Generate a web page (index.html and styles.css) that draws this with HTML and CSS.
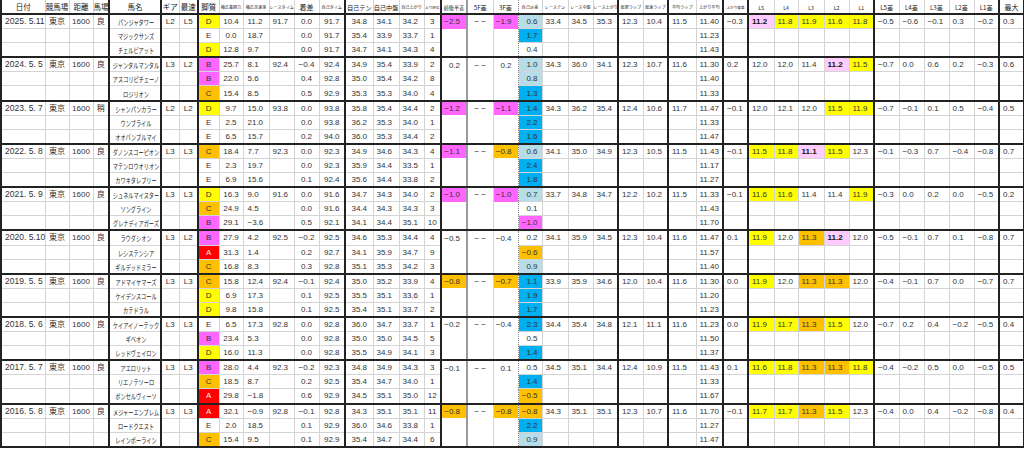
FILE: index.html
```html
<!DOCTYPE html>
<html lang="ja">
<head>
<meta charset="utf-8">
<title>NHKマイルC 過去10年</title>
<link rel="stylesheet" href="styles.css">
</head>
<body>
<table class="races">
<colgroup>
<col class="w44 tk"><col class="w24"><col class="w24"><col class="w16">
<col class="w52 tk"><col class="w18 tk"><col class="w19"><col class="w21 tk">
<col class="w24"><col class="w26"><col class="w25"><col class="w25"><col class="w26">
<col class="w28 tk"><col class="w26"><col class="w25"><col class="w17">
<col class="w26 tk"><col class="w26 mid"><col class="w25"><col class="w24">
<col class="w26"><col class="w25"><col class="w25"><col class="w25 tk"><col class="w25">
<col class="w28 tk"><col class="w27"><col class="w25 tk">
<col class="w26 tk"><col class="w24"><col class="w26"><col class="w25"><col class="w25">
<col class="w25 tk"><col class="w25"><col class="w25"><col class="w25"><col class="w25">
<col class="w25 tk end">
</colgroup>
<thead>
<tr class="head">
<th><span class="h8">日付</span></th><th><span class="h8">競馬場</span></th><th><span class="h8">距離</span></th><th><span class="h8">馬場</span></th>
<th><span class="h8">馬名</span></th><th><span class="h8">ギア</span></th><th><span class="h8">最速</span></th><th><span class="h8">脚質</span></th>
<th><span class="h4">補正着順力</span></th><th><span class="h4">補正走速率</span></th><th><span class="h4">レースタイム</span></th><th><span class="h7">着差</span></th><th><span class="h4">自己タイム</span></th>
<th><span class="h6">自己テン</span></th><th><span class="h6">自己中盤</span></th><th><span class="h4">自己上がり</span></th><th><span class="h3">上り順位</span></th>
<th><span class="h5">前後半差</span></th><th><span class="h6">5F差</span></th><th><span class="h6">3F差</span></th><th><span class="h4">自己3F差</span></th>
<th><span class="h4">レーステン</span></th><th><span class="h4">レース中盤</span></th><th><span class="h4">レース上がり</span></th><th><span class="h4">最遅ラップ</span></th><th><span class="h4">最速ラップ</span></th>
<th><span class="h4">平均ラップ</span></th><th><span class="h4">上がり平均</span></th><th><span class="h3">上がり偏差</span></th>
<th><span class="h5">L5</span></th><th><span class="h5">L4</span></th><th><span class="h5">L3</span></th><th><span class="h5">L2</span></th><th><span class="h5">L1</span></th>
<th><span class="h6">L5差</span></th><th><span class="h6">L4差</span></th><th><span class="h6">L3差</span></th><th><span class="h6">L2差</span></th><th><span class="h6">L1差</span></th>
<th><span class="h7">最大</span></th>
</tr>
</thead>
<tbody>
<!-- 2025 -->
<tr class="top"><td>2025. 5.11</td><td>東京</td><td>1600</td><td>良</td><td><span class="kana">パンジャタワー</span></td><td>L2</td><td>L5</td><td class="y">D</td><td>10.4</td><td>11.2</td><td>91.7</td><td>0.0</td><td>91.7</td><td>34.8</td><td>34.1</td><td>34.2</td><td>3</td><td class="m">−2.5</td><td>− −</td><td class="m">−1.9</td><td class="lb">0.6</td><td>33.4</td><td>34.5</td><td>35.3</td><td>12.3</td><td>10.4</td><td>11.5</td><td>11.40</td><td>−0.3</td><td class="pk b">11.2</td><td class="y">11.8</td><td class="y">11.9</td><td class="y">11.6</td><td class="y">11.8</td><td>−0.5</td><td>−0.6</td><td>−0.1</td><td>0.3</td><td>−0.2</td><td>0.3</td></tr>
<tr class="sub"><td></td><td></td><td></td><td></td><td><span class="kana">マジックサンズ</span></td><td></td><td></td><td>E</td><td>0.0</td><td>18.7</td><td></td><td>0.0</td><td>91.7</td><td>35.4</td><td>33.9</td><td>33.7</td><td>1</td><td></td><td></td><td></td><td class="bl">1.7</td><td></td><td></td><td></td><td></td><td></td><td></td><td>11.23</td><td></td><td></td><td></td><td></td><td></td><td></td><td></td><td></td><td></td><td></td><td></td><td></td></tr>
<tr class="sub"><td></td><td></td><td></td><td></td><td><span class="kana">チェルビアット</span></td><td></td><td></td><td class="y">D</td><td>12.8</td><td>9.7</td><td></td><td>0.0</td><td>91.7</td><td>34.7</td><td>34.1</td><td>34.3</td><td>4</td><td></td><td></td><td></td><td>0.4</td><td></td><td></td><td></td><td></td><td></td><td></td><td>11.43</td><td></td><td></td><td></td><td></td><td></td><td></td><td></td><td></td><td></td><td></td><td></td><td></td></tr>
<!-- 2024 -->
<tr class="top"><td>2024. 5. 5</td><td>東京</td><td>1600</td><td>良</td><td><span class="kana">ジャンタルマンタル</span></td><td>L3</td><td>L2</td><td class="m">B</td><td>25.7</td><td>8.1</td><td>92.4</td><td>−0.4</td><td>92.4</td><td>34.9</td><td>35.4</td><td>33.9</td><td>2</td><td>0.2</td><td>− −</td><td>0.2</td><td class="lb">1.0</td><td>34.3</td><td>36.0</td><td>34.1</td><td>12.3</td><td>10.7</td><td>11.6</td><td>11.30</td><td>0.2</td><td>12.0</td><td>12.0</td><td>11.4</td><td class="pk b">11.2</td><td class="y">11.5</td><td>−0.7</td><td>0.0</td><td>0.6</td><td>0.2</td><td>−0.3</td><td>0.6</td></tr>
<tr class="sub"><td></td><td></td><td></td><td></td><td><span class="kana">アスコリピチェーノ</span></td><td></td><td></td><td class="m">B</td><td>22.0</td><td>5.6</td><td></td><td>0.4</td><td>92.8</td><td>35.0</td><td>35.4</td><td>34.2</td><td>8</td><td></td><td></td><td></td><td class="lb">0.8</td><td></td><td></td><td></td><td></td><td></td><td></td><td>11.40</td><td></td><td></td><td></td><td></td><td></td><td></td><td></td><td></td><td></td><td></td><td></td><td></td></tr>
<tr class="sub"><td></td><td></td><td></td><td></td><td><span class="kana">ロジリオン</span></td><td></td><td></td><td class="o">C</td><td>15.4</td><td>8.5</td><td></td><td>0.5</td><td>92.9</td><td>35.3</td><td>35.3</td><td>34.0</td><td>4</td><td></td><td></td><td></td><td class="bl">1.3</td><td></td><td></td><td></td><td></td><td></td><td></td><td>11.33</td><td></td><td></td><td></td><td></td><td></td><td></td><td></td><td></td><td></td><td></td><td></td><td></td></tr>
<!-- 2023 -->
<tr class="top"><td>2023. 5. 7</td><td>東京</td><td>1600</td><td>稍</td><td><span class="kana">シャンパンカラー</span></td><td>L2</td><td>L2</td><td class="y">D</td><td>9.7</td><td>15.0</td><td>93.8</td><td>0.0</td><td>93.8</td><td>35.8</td><td>35.4</td><td>34.4</td><td>2</td><td class="m">−1.2</td><td>− −</td><td class="m">−1.1</td><td class="bl">1.4</td><td>34.3</td><td>36.2</td><td>35.4</td><td>12.4</td><td>10.6</td><td>11.7</td><td>11.47</td><td>−0.1</td><td>12.0</td><td>12.1</td><td>12.0</td><td class="y">11.5</td><td class="y">11.9</td><td>−0.7</td><td>−0.1</td><td>0.1</td><td>0.5</td><td>−0.4</td><td>0.5</td></tr>
<tr class="sub"><td></td><td></td><td></td><td></td><td><span class="kana">ウンブライル</span></td><td></td><td></td><td>E</td><td>2.5</td><td>21.0</td><td></td><td>0.0</td><td>93.8</td><td>36.2</td><td>35.3</td><td>34.0</td><td>1</td><td></td><td></td><td></td><td class="bl">2.2</td><td></td><td></td><td></td><td></td><td></td><td></td><td>11.33</td><td></td><td></td><td></td><td></td><td></td><td></td><td></td><td></td><td></td><td></td><td></td><td></td></tr>
<tr class="sub"><td></td><td></td><td></td><td></td><td><span class="kana">オオバンブルマイ</span></td><td></td><td></td><td>E</td><td>6.5</td><td>15.7</td><td></td><td>0.2</td><td>94.0</td><td>36.0</td><td>35.3</td><td>34.4</td><td>2</td><td></td><td></td><td></td><td class="bl">1.6</td><td></td><td></td><td></td><td></td><td></td><td></td><td>11.47</td><td></td><td></td><td></td><td></td><td></td><td></td><td></td><td></td><td></td><td></td><td></td><td></td></tr>
<!-- 2022 -->
<tr class="top"><td>2022. 5. 8</td><td>東京</td><td>1600</td><td>良</td><td><span class="kana">ダノンスコーピオン</span></td><td>L3</td><td>L3</td><td class="o">C</td><td>18.4</td><td>7.7</td><td>92.3</td><td>0.0</td><td>92.3</td><td>34.9</td><td>34.6</td><td>34.3</td><td>4</td><td class="m">−1.1</td><td>− −</td><td class="o">−0.8</td><td class="lb">0.6</td><td>34.1</td><td>35.0</td><td>34.9</td><td>12.3</td><td>10.5</td><td>11.5</td><td>11.43</td><td>−0.1</td><td class="y">11.5</td><td class="y">11.8</td><td class="pk b">11.1</td><td class="y">11.5</td><td>12.3</td><td>−0.1</td><td>−0.3</td><td>0.7</td><td>−0.4</td><td>−0.8</td><td>0.7</td></tr>
<tr class="sub"><td></td><td></td><td></td><td></td><td><span class="kana">マテンロウオリオン</span></td><td></td><td></td><td>E</td><td>2.3</td><td>19.7</td><td></td><td>0.0</td><td>92.3</td><td>35.9</td><td>34.4</td><td>33.5</td><td>1</td><td></td><td></td><td></td><td class="bl">2.4</td><td></td><td></td><td></td><td></td><td></td><td></td><td>11.17</td><td></td><td></td><td></td><td></td><td></td><td></td><td></td><td></td><td></td><td></td><td></td><td></td></tr>
<tr class="sub"><td></td><td></td><td></td><td></td><td><span class="kana">カワキタレブリー</span></td><td></td><td></td><td>E</td><td>6.9</td><td>15.6</td><td></td><td>0.1</td><td>92.4</td><td>35.6</td><td>34.4</td><td>33.8</td><td>2</td><td></td><td></td><td></td><td class="bl">1.8</td><td></td><td></td><td></td><td></td><td></td><td></td><td>11.27</td><td></td><td></td><td></td><td></td><td></td><td></td><td></td><td></td><td></td><td></td><td></td><td></td></tr>
<!-- 2021 -->
<tr class="top"><td>2021. 5. 9</td><td>東京</td><td>1600</td><td>良</td><td><span class="kana">シュネルマイスター</span></td><td>L3</td><td>L3</td><td class="y">D</td><td>16.3</td><td>9.0</td><td>91.6</td><td>0.0</td><td>91.6</td><td>34.7</td><td>34.3</td><td>34.0</td><td>2</td><td class="m">−1.0</td><td>− −</td><td class="m">−1.0</td><td class="lb">0.7</td><td>33.7</td><td>34.8</td><td>34.7</td><td>12.2</td><td>10.2</td><td>11.5</td><td>11.33</td><td>−0.1</td><td class="y">11.6</td><td class="y">11.6</td><td>11.4</td><td>11.4</td><td class="y">11.9</td><td>−0.3</td><td>0.0</td><td>0.2</td><td>0.0</td><td>−0.5</td><td>0.2</td></tr>
<tr class="sub"><td></td><td></td><td></td><td></td><td><span class="kana">ソングライン</span></td><td></td><td></td><td class="o">C</td><td>24.9</td><td>4.5</td><td></td><td>0.0</td><td>91.6</td><td>34.4</td><td>34.3</td><td>34.3</td><td>3</td><td></td><td></td><td></td><td>0.1</td><td></td><td></td><td></td><td></td><td></td><td></td><td>11.43</td><td></td><td></td><td></td><td></td><td></td><td></td><td></td><td></td><td></td><td></td><td></td><td></td></tr>
<tr class="sub"><td></td><td></td><td></td><td></td><td><span class="kana">グレナディアガーズ</span></td><td></td><td></td><td class="m">B</td><td>29.1</td><td>−3.6</td><td></td><td>0.5</td><td>92.1</td><td>34.1</td><td>34.4</td><td>35.1</td><td>10</td><td></td><td></td><td></td><td class="m">−1.0</td><td></td><td></td><td></td><td></td><td></td><td></td><td>11.70</td><td></td><td></td><td></td><td></td><td></td><td></td><td></td><td></td><td></td><td></td><td></td><td></td></tr>
<!-- 2020 -->
<tr class="top"><td>2020. 5.10</td><td>東京</td><td>1600</td><td>良</td><td><span class="kana">ラウダシオン</span></td><td>L3</td><td>L2</td><td class="m">B</td><td>27.9</td><td>4.2</td><td>92.5</td><td>−0.2</td><td>92.5</td><td>34.6</td><td>35.3</td><td>34.4</td><td>4</td><td>−0.5</td><td>− −</td><td>−0.4</td><td>0.2</td><td>34.1</td><td>35.9</td><td>34.5</td><td>12.3</td><td>10.4</td><td>11.6</td><td>11.47</td><td>0.1</td><td class="y">11.9</td><td>12.0</td><td class="o">11.3</td><td class="pk b">11.2</td><td>12.0</td><td>−0.5</td><td>−0.1</td><td>0.7</td><td>0.1</td><td>−0.8</td><td>0.7</td></tr>
<tr class="sub"><td></td><td></td><td></td><td></td><td><span class="kana">レシステンシア</span></td><td></td><td></td><td class="rd">A</td><td>31.3</td><td>1.4</td><td></td><td>0.2</td><td>92.7</td><td>34.1</td><td>35.9</td><td>34.7</td><td>9</td><td></td><td></td><td></td><td class="o">−0.6</td><td></td><td></td><td></td><td></td><td></td><td></td><td>11.57</td><td></td><td></td><td></td><td></td><td></td><td></td><td></td><td></td><td></td><td></td><td></td><td></td></tr>
<tr class="sub"><td></td><td></td><td></td><td></td><td><span class="kana">ギルデッドミラー</span></td><td></td><td></td><td class="o">C</td><td>16.8</td><td>8.3</td><td></td><td>0.3</td><td>92.8</td><td>35.1</td><td>35.3</td><td>34.2</td><td>3</td><td></td><td></td><td></td><td class="lb">0.9</td><td></td><td></td><td></td><td></td><td></td><td></td><td>11.40</td><td></td><td></td><td></td><td></td><td></td><td></td><td></td><td></td><td></td><td></td><td></td><td></td></tr>
<!-- 2019 -->
<tr class="top"><td>2019. 5. 5</td><td>東京</td><td>1600</td><td>良</td><td><span class="kana">アドマイヤマーズ</span></td><td>L3</td><td>L3</td><td class="o">C</td><td>15.8</td><td>12.4</td><td>92.4</td><td>−0.1</td><td>92.4</td><td>35.0</td><td>35.2</td><td>33.9</td><td>4</td><td class="o">−0.8</td><td>− −</td><td class="o">−0.7</td><td class="bl">1.1</td><td>33.9</td><td>35.9</td><td>34.6</td><td>12.0</td><td>10.4</td><td>11.6</td><td>11.30</td><td>0.0</td><td class="y">11.9</td><td>12.0</td><td class="o">11.3</td><td class="o">11.3</td><td>12.0</td><td>−0.4</td><td>−0.1</td><td>0.7</td><td>0.0</td><td>−0.7</td><td>0.7</td></tr>
<tr class="sub"><td></td><td></td><td></td><td></td><td><span class="kana">ケイデンスコール</span></td><td></td><td></td><td class="y">D</td><td>6.9</td><td>17.3</td><td></td><td>0.1</td><td>92.5</td><td>35.5</td><td>35.1</td><td>33.6</td><td>1</td><td></td><td></td><td></td><td class="bl">1.9</td><td></td><td></td><td></td><td></td><td></td><td></td><td>11.20</td><td></td><td></td><td></td><td></td><td></td><td></td><td></td><td></td><td></td><td></td><td></td><td></td></tr>
<tr class="sub"><td></td><td></td><td></td><td></td><td><span class="kana">カテドラル</span></td><td></td><td></td><td class="y">D</td><td>9.8</td><td>15.8</td><td></td><td>0.1</td><td>92.5</td><td>35.4</td><td>35.1</td><td>33.7</td><td>2</td><td></td><td></td><td></td><td class="bl">1.7</td><td></td><td></td><td></td><td></td><td></td><td></td><td>11.23</td><td></td><td></td><td></td><td></td><td></td><td></td><td></td><td></td><td></td><td></td><td></td><td></td></tr>
<!-- 2018 -->
<tr class="top"><td>2018. 5. 6</td><td>東京</td><td>1600</td><td>良</td><td><span class="kana">ケイアイノーテック</span></td><td>L3</td><td>L3</td><td>E</td><td>6.5</td><td>17.3</td><td>92.8</td><td>0.0</td><td>92.8</td><td>36.0</td><td>34.7</td><td>33.7</td><td>1</td><td>−0.2</td><td>− −</td><td>−0.4</td><td class="bl">2.3</td><td>34.4</td><td>35.4</td><td>34.8</td><td>12.1</td><td>11.1</td><td>11.6</td><td>11.23</td><td>0.0</td><td class="y">11.9</td><td class="y">11.7</td><td class="o">11.3</td><td class="y">11.5</td><td>12.0</td><td>−0.7</td><td>0.2</td><td>0.4</td><td>−0.2</td><td>−0.5</td><td>0.4</td></tr>
<tr class="sub"><td></td><td></td><td></td><td></td><td><span class="kana">ギベオン</span></td><td></td><td></td><td class="m">B</td><td>23.4</td><td>5.3</td><td></td><td>0.0</td><td>92.8</td><td>35.0</td><td>35.0</td><td>34.5</td><td>5</td><td></td><td></td><td></td><td>0.5</td><td></td><td></td><td></td><td></td><td></td><td></td><td>11.50</td><td></td><td></td><td></td><td></td><td></td><td></td><td></td><td></td><td></td><td></td><td></td><td></td></tr>
<tr class="sub"><td></td><td></td><td></td><td></td><td><span class="kana">レッドヴェイロン</span></td><td></td><td></td><td class="y">D</td><td>16.0</td><td>11.3</td><td></td><td>0.0</td><td>92.8</td><td>35.5</td><td>34.9</td><td>34.1</td><td>3</td><td></td><td></td><td></td><td class="bl">1.4</td><td></td><td></td><td></td><td></td><td></td><td></td><td>11.37</td><td></td><td></td><td></td><td></td><td></td><td></td><td></td><td></td><td></td><td></td><td></td><td></td></tr>
<!-- 2017 -->
<tr class="top"><td>2017. 5. 7</td><td>東京</td><td>1600</td><td>良</td><td><span class="kana">アエロリット</span></td><td>L3</td><td>L3</td><td class="m">B</td><td>28.0</td><td>4.4</td><td>92.3</td><td>−0.2</td><td>92.3</td><td>34.8</td><td>34.9</td><td>34.3</td><td>3</td><td>−0.1</td><td>− −</td><td>0.1</td><td>0.5</td><td>34.5</td><td>35.1</td><td>34.4</td><td>12.4</td><td>10.9</td><td>11.5</td><td>11.43</td><td>0.1</td><td class="y">11.6</td><td class="y">11.8</td><td class="o">11.3</td><td class="o">11.3</td><td class="y">11.8</td><td>−0.4</td><td>−0.2</td><td>0.5</td><td>0.0</td><td>−0.5</td><td>0.5</td></tr>
<tr class="sub"><td></td><td></td><td></td><td></td><td><span class="kana">リエノテソーロ</span></td><td></td><td></td><td class="o">C</td><td>18.5</td><td>8.7</td><td></td><td>0.2</td><td>92.5</td><td>35.4</td><td>34.7</td><td>34.0</td><td>1</td><td></td><td></td><td></td><td class="bl">1.4</td><td></td><td></td><td></td><td></td><td></td><td></td><td>11.33</td><td></td><td></td><td></td><td></td><td></td><td></td><td></td><td></td><td></td><td></td><td></td><td></td></tr>
<tr class="sub"><td></td><td></td><td></td><td></td><td><span class="kana">ボンセルヴィーソ</span></td><td></td><td></td><td class="rd">A</td><td>29.8</td><td>−1.8</td><td></td><td>0.6</td><td>92.9</td><td>34.5</td><td>35.1</td><td>35.0</td><td>12</td><td></td><td></td><td></td><td class="o">−0.5</td><td></td><td></td><td></td><td></td><td></td><td></td><td>11.67</td><td></td><td></td><td></td><td></td><td></td><td></td><td></td><td></td><td></td><td></td><td></td><td></td></tr>
<!-- 2016 -->
<tr class="top"><td>2016. 5. 8</td><td>東京</td><td>1600</td><td>良</td><td><span class="kana">メジャーエンブレム</span></td><td>L3</td><td>L3</td><td class="rd">A</td><td>32.1</td><td>−0.9</td><td>92.8</td><td>−0.1</td><td>92.8</td><td>34.3</td><td>35.1</td><td>35.1</td><td>11</td><td class="o">−0.8</td><td>− −</td><td class="o">−0.8</td><td class="o">−0.8</td><td>34.3</td><td>35.1</td><td>35.1</td><td>12.3</td><td>10.7</td><td>11.6</td><td>11.70</td><td>−0.1</td><td class="y">11.7</td><td class="y">11.7</td><td class="o">11.3</td><td class="y">11.5</td><td>12.3</td><td>−0.4</td><td>0.0</td><td>0.4</td><td>−0.2</td><td>−0.8</td><td>0.4</td></tr>
<tr class="sub"><td></td><td></td><td></td><td></td><td><span class="kana">ロードクエスト</span></td><td></td><td></td><td>E</td><td>2.0</td><td>18.5</td><td></td><td>0.1</td><td>92.9</td><td>36.0</td><td>34.6</td><td>33.8</td><td>1</td><td></td><td></td><td></td><td class="bl">2.2</td><td></td><td></td><td></td><td></td><td></td><td></td><td>11.27</td><td></td><td></td><td></td><td></td><td></td><td></td><td></td><td></td><td></td><td></td><td></td><td></td></tr>
<tr class="sub last"><td></td><td></td><td></td><td></td><td><span class="kana">レインボーライン</span></td><td></td><td></td><td class="o">C</td><td>15.4</td><td>9.5</td><td></td><td>0.1</td><td>92.9</td><td>35.4</td><td>34.7</td><td>34.4</td><td>6</td><td></td><td></td><td></td><td class="lb">0.9</td><td></td><td></td><td></td><td></td><td></td><td></td><td>11.47</td><td></td><td></td><td></td><td></td><td></td><td></td><td></td><td></td><td></td><td></td><td></td><td></td></tr>
</tbody>
</table>
</body>
</html>
```

FILE: styles.css
```css
html, body {
  margin: 0;
  padding: 0;
  background: #ffffff;
}

body {
  font-family: "Liberation Sans", "Noto Sans CJK JP", sans-serif;
  color: #333333;
}

.races {
  border-collapse: collapse;
  table-layout: fixed;
  width: 1024px;
  font-size: 8px;
  line-height: 9px;
}

/* column widths */
.races col.w16 { width: 16px; }
.races col.w17 { width: 17px; }
.races col.w18 { width: 18px; }
.races col.w19 { width: 19px; }
.races col.w21 { width: 21px; }
.races col.w24 { width: 24px; }
.races col.w25 { width: 25px; }
.races col.w26 { width: 26px; }
.races col.w27 { width: 27px; }
.races col.w28 { width: 28px; }
.races col.w44 { width: 44px; }
.races col.w52 { width: 52px; }

/* heavy column rules */
.races col.tk { border-left: 2px solid #222222; }
.races col.mid { border-left: 2px solid #9a9a9a; }
.races col.end { border-right: 2px solid #222222; }

.races th,
.races td {
  border: 1px solid #d4d4d4;
  padding: 0 0 0 3px;
  white-space: nowrap;
  overflow: hidden;
  text-align: left;
  vertical-align: middle;
}

/* header */
.races .head th {
  height: 13px;
  padding: 0;
  text-align: center;
  font-weight: normal;
  color: #1a1a1a;
  font-family: "Noto Sans CJK JP", sans-serif;
  border-top: none;
  border-bottom: 2px solid #222222;
}
.h8 { font-size: 7.5px; }
.h7 { font-size: 7px; }
.h6 { font-size: 6.2px; }
.h5 { font-size: 5.2px; }
.h4 { font-size: 4.1px; }
.h3 { font-size: 3.6px; }

/* body rows */
.races tbody td { height: 13.1px; }
.races tr.top td { border-top: 2px solid #222222; }
.races tr.last td { border-bottom: 2px solid #222222; }

/* merged look of 前後半差 / 5F差 / 3F差 in follow-up rows */
.races tr.sub td:nth-child(18),
.races tr.sub td:nth-child(19),
.races tr.sub td:nth-child(20) {
  border-top-style: hidden;
}

/* dotted rule before 自己3F差 */
.races td:nth-child(20),
.races th:nth-child(20) { border-right: 1px dotted #8a8a8a; }
.races td:nth-child(21),
.races th:nth-child(21) { border-left: 1px dotted #8a8a8a; }

/* alignment by column */
.races td:nth-child(2),
.races td:nth-child(3),
.races td:nth-child(4),
.races td:nth-child(6),
.races td:nth-child(7),
.races td:nth-child(8),
.races td:nth-child(9),
.races td:nth-child(12),
.races td:nth-child(13),
.races td:nth-child(14),
.races td:nth-child(17),
.races td:nth-child(19) {
  text-align: center;
  padding: 0;
}
.races td:nth-child(10) { padding-left: 4px; }
.races td:nth-child(18),
.races td:nth-child(20) {
  text-align: right;
  padding: 0 6px 0 0;
}
.races td:nth-child(21) {
  text-align: right;
  padding: 0 4px 0 0;
}
.races td:nth-child(1) { font-size: 8.5px; }
.races td:nth-child(2),
.races td:nth-child(4) { font-size: 8px; }

/* horse names, condensed */
.races td:nth-child(5) { padding: 0; }
.kana {
  display: block;
  width: 74px;
  margin-left: -11px;
  text-align: center;
  font-family: "Noto Sans CJK JP", sans-serif;
  font-size: 7.4px;
  transform: scaleX(0.7);
  color: #222222;
}

/* fills */
.y  { background: #ffff00; }
.m  { background: #ff66ff; }
.o  { background: #ffc000; }
.rd { background: #ff0000; color: #ffecec; }
.pk { background: #ffccff; }
.lb { background: #b7dee8; }
.bl { background: #00b0f0; }
.b  { font-weight: bold; color: #111111; }
```
